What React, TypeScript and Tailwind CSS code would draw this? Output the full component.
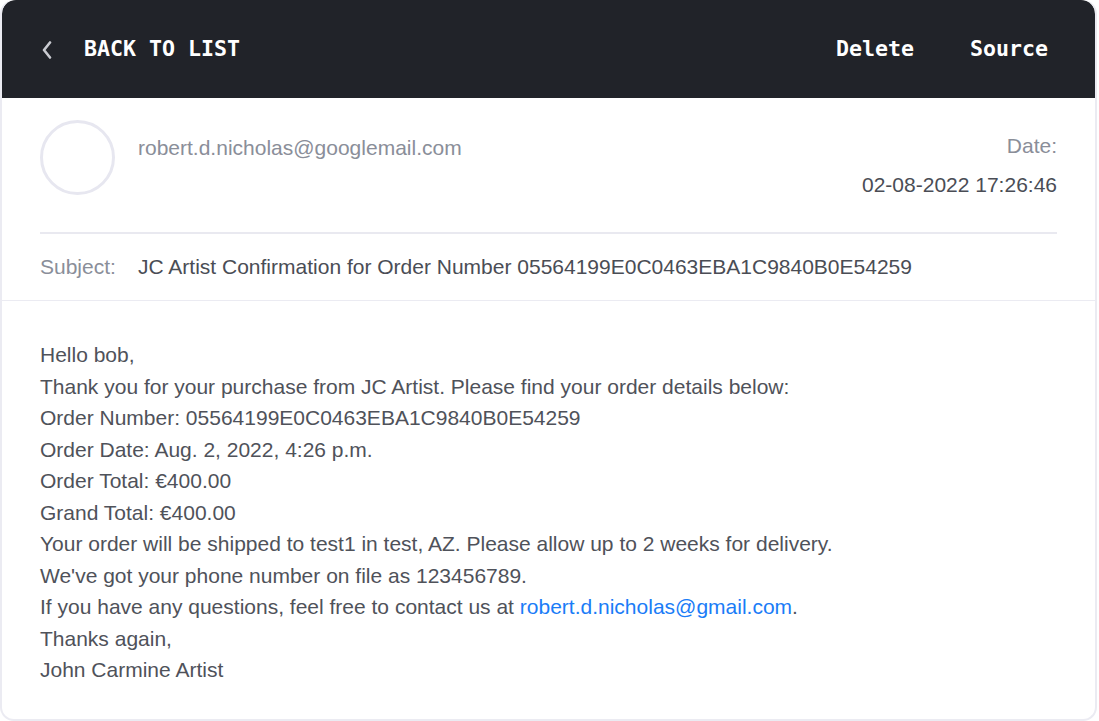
import React from "react";

export default function App() {
  const body = "font-['Liberation_Sans',Arial,sans-serif]";
  return (
    <div className="w-[1099px] h-[721px] bg-white overflow-hidden">
      <div className="w-[1097px] h-[721px] rounded-[14px] border-2 border-[#ebebf2] border-t-0 overflow-hidden bg-white">
        <header className="h-[98px] bg-[#212329] rounded-t-[14px] flex items-center justify-between pl-[38px] pr-[47px] font-['DejaVu_Sans_Mono',monospace] font-bold text-white text-[21.6px]">
          <div className="flex items-center">
            <svg width="14" height="18" viewBox="0 0 14 18" className="mr-[30px] mt-[2px]">
              <path d="M10 1.5 L4 9 L10 16.5" fill="none" stroke="#c9cad0" strokeWidth="2.6" strokeLinecap="round" strokeLinejoin="round" />
            </svg>
            <span>BACK TO LIST</span>
          </div>
          <div className="flex items-center gap-[56px]">
            <span>Delete</span>
            <span>Source</span>
          </div>
        </header>
        <section className={`px-[38px] ${body}`}>
          <div className="flex justify-between pt-[22px]">
            <div className="flex">
              <div className="w-[75px] h-[75px] rounded-full border-[3px] border-[#e7e7f0]" />
              <div className="ml-[23px] mt-[14px] text-[21px] leading-[28px] text-[#8a8e99]">robert.d.nicholas@googlemail.com</div>
            </div>
            <div className="text-right text-[21px] leading-[28px]">
              <div className="mt-[12px] text-[#8a8e99]">Date:</div>
              <div className="mt-[11px] text-[#4a4d55]">02-08-2022 17:26:46</div>
            </div>
          </div>
          <div className="mt-[33px] border-t-2 border-[#e9e9f0]" />
          <div className="flex pt-[19px] pb-[19px] text-[21px] leading-[28px]">
            <span className="text-[#8a8e99] w-[98px]">Subject:</span>
            <span className="text-[#4a4d55]">JC Artist Confirmation for Order Number 05564199E0C0463EBA1C9840B0E54259</span>
          </div>
        </section>
        <div className="border-t border-[#ebebf2]" />
        <section className={`px-[38px] pt-[38px] text-[21px] leading-[31.5px] text-[#4f525a] ${body}`}>
          <div>Hello bob,</div>
          <div>Thank you for your purchase from JC Artist. Please find your order details below:</div>
          <div>Order Number: 05564199E0C0463EBA1C9840B0E54259</div>
          <div>Order Date: Aug. 2, 2022, 4:26 p.m.</div>
          <div>Order Total: €400.00</div>
          <div>Grand Total: €400.00</div>
          <div>Your order will be shipped to test1 in test, AZ. Please allow up to 2 weeks for delivery.</div>
          <div>We've got your phone number on file as 123456789.</div>
          <div>
            If you have any questions, feel free to contact us at{" "}
            <a className="text-[#1a7cf7]">robert.d.nicholas@gmail.com</a>.
          </div>
          <div>Thanks again,</div>
          <div>John Carmine Artist</div>
        </section>
      </div>
    </div>
  );
}
